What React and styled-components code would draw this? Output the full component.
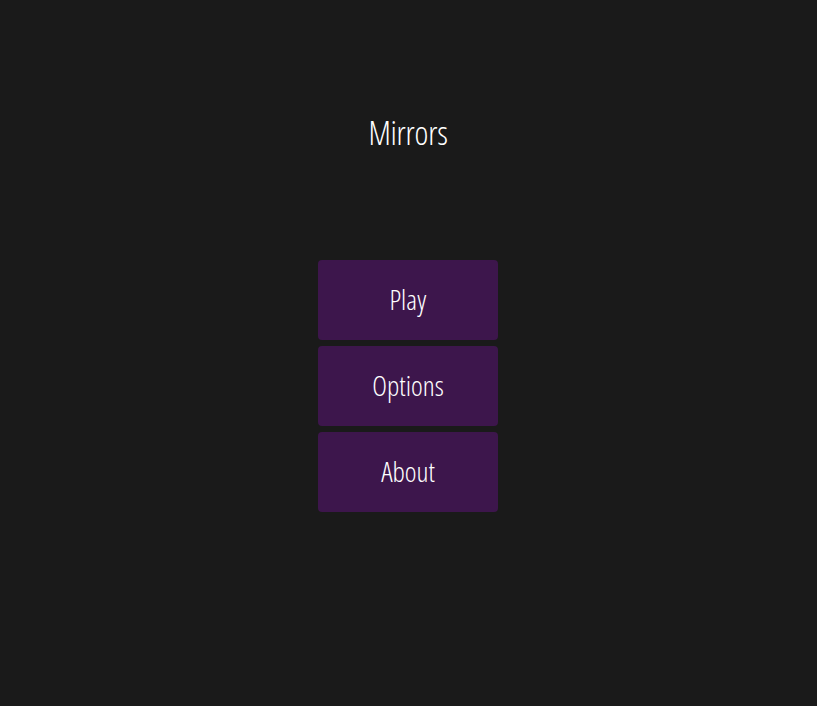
import styled, { createGlobalStyle } from "styled-components";

const GlobalStyle = createGlobalStyle`
    html, body {
        margin: 0;
        padding: 0;
        background-color: #1A1A1A;
    }
    body {
        font-family: "Open Sans", "DejaVu Sans Condensed", sans-serif;
        font-stretch: 75%;
        color: #FFFFFF;
    }
`

export default function App() {
    const items = ["Play", "Options", "About"];

    return (
        <>
            <GlobalStyle />
            <Screen>
                <Title>Mirrors</Title>
                <Menu>
                    {items.map(item =>
                        <MenuButton key={item}>{item}</MenuButton>
                    )}
                </Menu>
            </Screen>
        </>
    )
}

const Screen = styled.main`
    display: flex;
    flex-direction: column;
    align-items: center;
    width: 100%;
    height: 100vh;
    padding-right: 1px;
    box-sizing: border-box;
`

const Title = styled.h1`
    margin: 110px 0 0 0;
    height: 46px;
    line-height: 46px;
    font-size: 33px;
    font-weight: 330;
    letter-spacing: -0.2px;
    color: #FFFFFF;
`

const Menu = styled.div`
    display: flex;
    flex-direction: column;
    gap: 6px;
    margin-top: 104px;
`

const MenuButton = styled.button`
    width: 180px;
    height: 80px;
    padding: 0 0 2px 0;
    font-family: inherit;
    font-stretch: inherit;
    font-size: 28px;
    font-weight: 330;
    letter-spacing: 0;
    color: #FFFFFF;
    background-color: #3D164C;
    border: none;
    border-radius: 4px;
    cursor: pointer;
`
